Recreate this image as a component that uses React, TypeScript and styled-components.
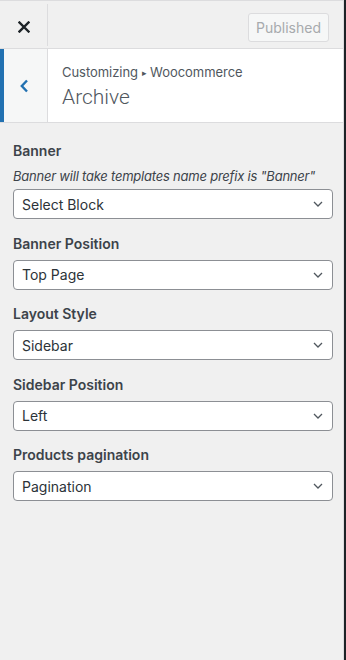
import styled, { createGlobalStyle } from 'styled-components';

const GlobalStyle = createGlobalStyle`
  html, body, #root {
    height: 100%;
  }
  body {
    margin: 0;
    font-family: Inter, "Liberation Sans", sans-serif;
    background: #f0f0f0;
    -webkit-font-smoothing: antialiased;
  }
  * {
    box-sizing: border-box;
  }
`;

interface Field {
  label: string;
  description?: string;
  value: string;
}

const fields: Field[] = [
  {
    label: 'Banner',
    description: 'Banner will take templates name prefix is "Banner"',
    value: 'Select Block',
  },
  { label: 'Banner Position', value: 'Top Page' },
  { label: 'Layout Style', value: 'Sidebar' },
  { label: 'Sidebar Position', value: 'Left' },
  { label: 'Products pagination', value: 'Pagination' },
];

const CloseIcon = () => (
  <svg width="12" height="12" viewBox="0 0 12 12">
    <path d="M1.5 1.5 L10.5 10.5 M10.5 1.5 L1.5 10.5" stroke="#1d2327" strokeWidth="2.4" strokeLinecap="square" />
  </svg>
);

const BackIcon = () => (
  <svg width="10" height="14" viewBox="0 0 10 14">
    <path d="M8 1.5 L2.8 7 L8 12.5" fill="none" stroke="#2271b1" strokeWidth="2.4" />
  </svg>
);

const Chevron = () => (
  <svg width="10" height="6" viewBox="0 0 10 6">
    <path d="M1 1 L5 5 L9 1" fill="none" stroke="#50575e" strokeWidth="1.3" />
  </svg>
);

const App = () => {
  return (
    <>
      <GlobalStyle />
      <Page>
        <Sidebar>
          <TopBar>
            <CloseButton aria-label="Close">
              <CloseIcon />
            </CloseButton>
            <PublishButton disabled>Published</PublishButton>
          </TopBar>
          <SectionHeader>
            <BackButton aria-label="Back">
              <BackIcon />
            </BackButton>
            <TitleBlock>
              <Breadcrumb>
                Customizing <Arrow>▸</Arrow> Woocommerce
              </Breadcrumb>
              <Title>Archive</Title>
            </TitleBlock>
          </SectionHeader>
          <Controls>
            {fields.map((field) => (
              <Control key={field.label}>
                <Label>{field.label}</Label>
                {field.description && <Description>{field.description}</Description>}
                <SelectWrap>
                  <Select defaultValue={field.value}>
                    <option>{field.value}</option>
                  </Select>
                  <ChevronSlot>
                    <Chevron />
                  </ChevronSlot>
                </SelectWrap>
              </Control>
            ))}
          </Controls>
        </Sidebar>
        <PreviewEdge />
      </Page>
    </>
  );
};

const Page = styled.div`
  display: flex;
  height: 100%;
`;

const Sidebar = styled.div`
  flex: 1;
  display: flex;
  flex-direction: column;
  background: #f0f0f0;
  border-right: 1px solid #dcdcde;
`;

const PreviewEdge = styled.div`
  width: 2px;
  background: #1d2327;
`;

const TopBar = styled.div`
  display: flex;
  align-items: center;
  height: 49px;
  padding-top: 5px;
  border-top: 1px solid #dcdcde;
  border-bottom: 1px solid #dcdcde;
`;

const CloseButton = styled.div`
  width: 48px;
  height: 100%;
  margin-top: -5px;
  padding-top: 5px;
  display: flex;
  align-items: center;
  justify-content: center;
  border-right: 1px solid #dcdcde;
`;

const PublishButton = styled.button`
  margin-left: auto;
  margin-right: 14px;
  width: 81px;
  height: 29px;
  padding: 0;
  border: 1px solid #dcdcde;
  border-radius: 3px;
  background: #f6f7f7;
  color: #a7aaad;
  font-family: inherit;
  font-size: 14px;
`;

const SectionHeader = styled.div`
  display: flex;
  height: 74px;
  background: #fff;
  border-bottom: 1px solid #dcdcde;
`;

const BackButton = styled.div`
  width: 48px;
  display: flex;
  align-items: center;
  justify-content: center;
  padding-right: 3px;
  background: #f6f7f7;
  border-left: 4px solid #2271b1;
  border-right: 1px solid #dcdcde;
`;

const TitleBlock = styled.div`
  padding: 14px 0 0 14px;
  color: #50575e;
`;

const Breadcrumb = styled.div`
  font-size: 13px;
  line-height: 18px;
  margin-bottom: 2px;
  letter-spacing: -0.05px;
`;

const Arrow = styled.span`
  font-size: 9px;
  vertical-align: 1px;
`;

const Title = styled.div`
  font-family: Roboto, Inter, sans-serif;
  font-size: 21px;
  line-height: 26px;
  font-weight: 300;
`;

const Controls = styled.div`
  display: flex;
  flex-direction: column;
  gap: 14.5px;
  padding: 18px 10px 12px 13px;
`;

const Control = styled.div`
  display: flex;
  flex-direction: column;
`;

const Label = styled.div`
  font-size: 14px;
  line-height: 20px;
  font-weight: 600;
  color: #3c434a;
  margin-bottom: 6px;
`;

const Description = styled.div`
  font-size: 13px;
  line-height: 18px;
  font-style: italic;
  letter-spacing: -0.22px;
  color: #3c434a;
  margin: 0 0 4px;
`;

const SelectWrap = styled.div`
  position: relative;
`;

const Select = styled.select`
  appearance: none;
  width: 100%;
  height: 30px;
  padding: 0 24px 0 8px;
  border: 1px solid #8c8f94;
  border-radius: 4px;
  background: #fff;
  color: #2c3338;
  font-family: inherit;
  font-size: 14px;
  outline: none;
`;

const ChevronSlot = styled.span`
  position: absolute;
  right: 10px;
  top: 12px;
  display: flex;
  pointer-events: none;
`;

export default App;
